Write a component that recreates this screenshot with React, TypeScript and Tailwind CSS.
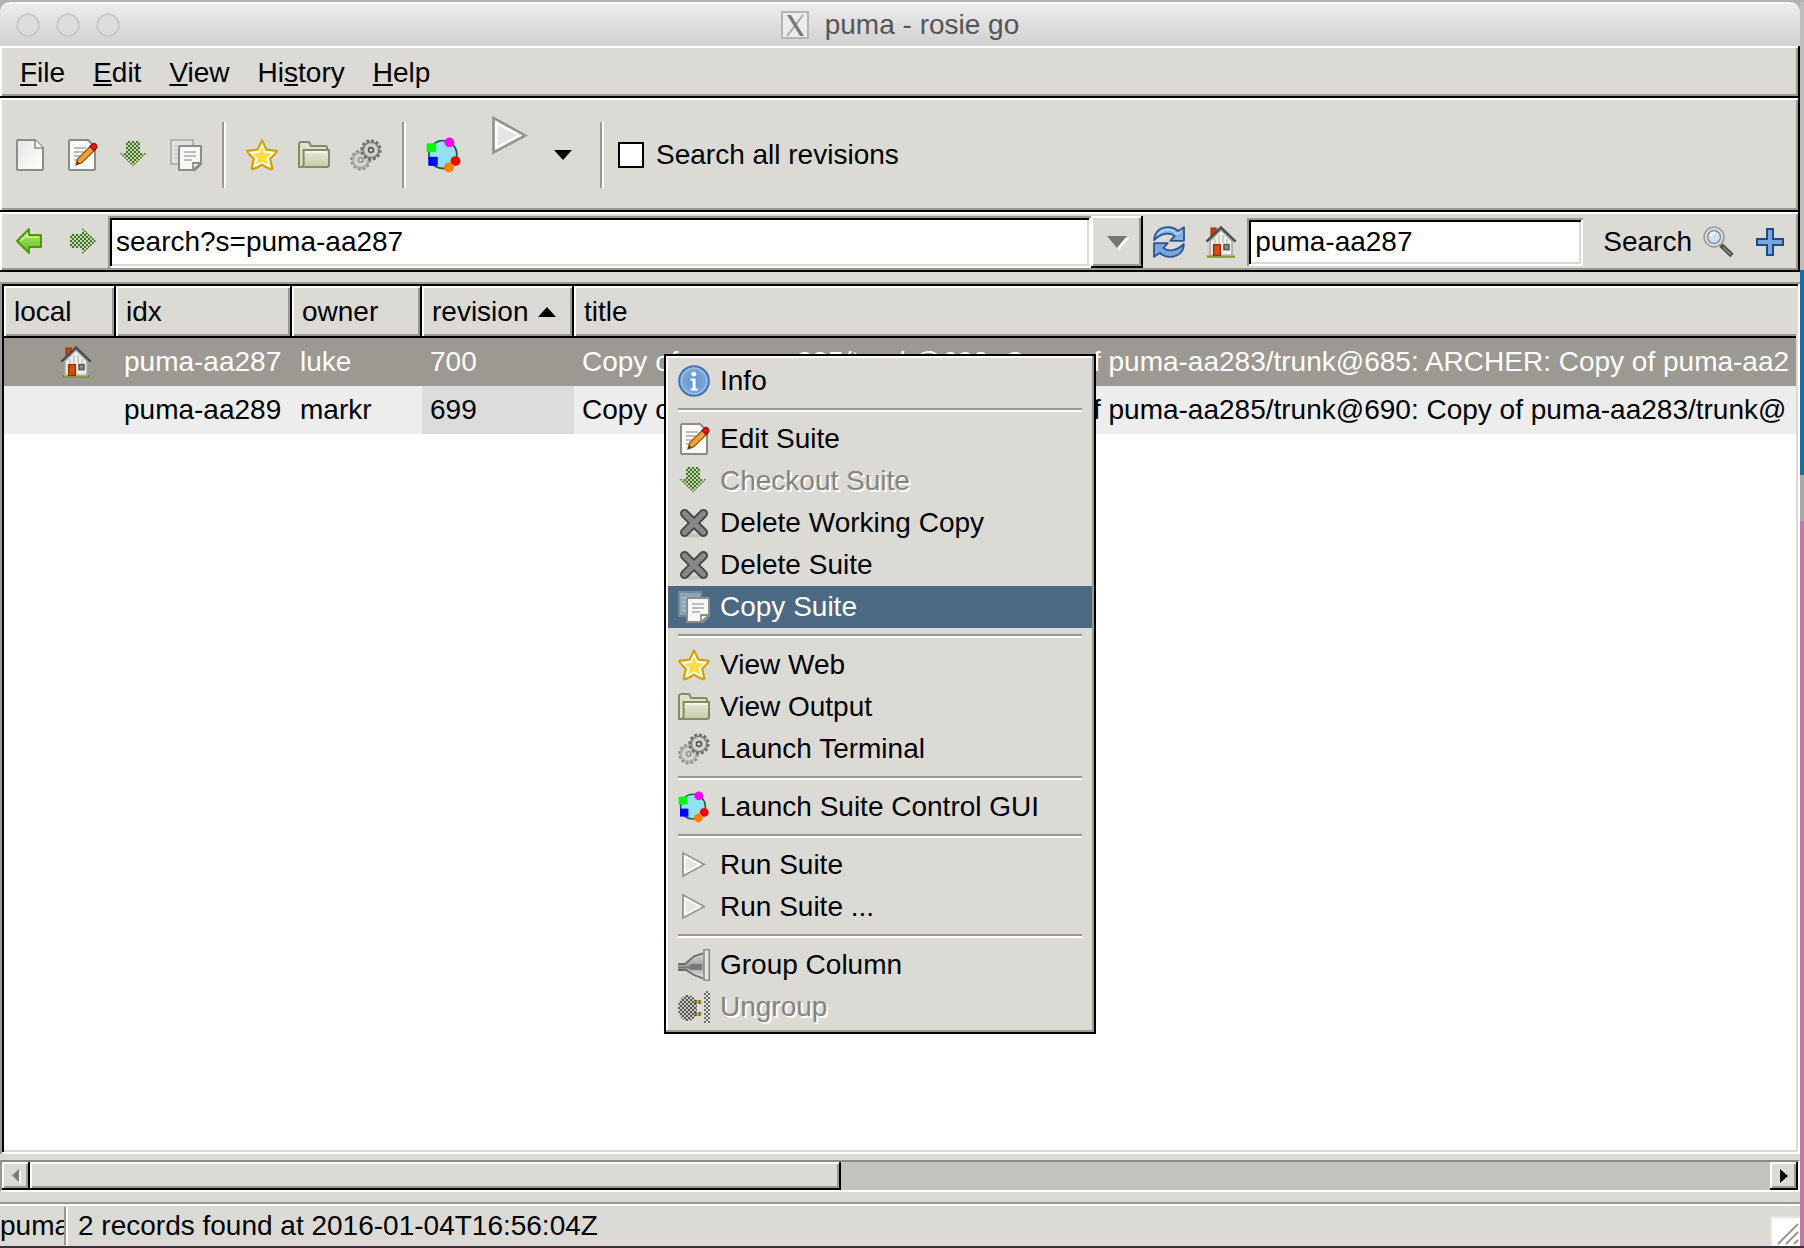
import { type FC, type ReactNode, useState } from "react";
import clsx from "clsx";

const raised =
  "bg-[#dbdad5] shadow-[inset_-2px_-2px_0_#000,inset_2px_2px_0_#fff,inset_-4px_-4px_0_#9b9891]";
const sunken =
  "shadow-[inset_2px_2px_0_#9b9891,inset_-2px_-2px_0_#fff,inset_4px_4px_0_#000,inset_-4px_-4px_0_#dbdad5]";

type IconProps = { className?: string };

const Svg: FC<{ className?: string; children: ReactNode }> = ({
  className = "size-8",
  children,
}) => (
  <svg viewBox="0 0 16 16" className={clsx("shrink-0", className)} aria-hidden>
    {children}
  </svg>
);

const SharedDefs: FC = () => (
  <svg className="absolute size-0" aria-hidden>
    <defs>
      <pattern id="dotsGreen" width="2" height="2" patternUnits="userSpaceOnUse">
        <rect width="1" height="1" fill="#3f7a1c" />
        <rect x="1" y="1" width="1" height="1" fill="#3f7a1c" />
      </pattern>
      <pattern id="dotsGrey" width="2" height="2" patternUnits="userSpaceOnUse">
        <rect width="1" height="1" fill="#55574f" />
        <rect x="1" y="1" width="1" height="1" fill="#55574f" />
      </pattern>
      <linearGradient id="paper" x1="0" y1="0" x2="1" y2="1">
        <stop offset="0" stopColor="#e6e6e4" />
        <stop offset="1" stopColor="#ffffff" />
      </linearGradient>
      <linearGradient id="green" x1="0" y1="0" x2="0" y2="1">
        <stop offset="0" stopColor="#b5ea7c" />
        <stop offset="1" stopColor="#62c01c" />
      </linearGradient>
      <linearGradient id="folder" x1="0" y1="0" x2="0" y2="1">
        <stop offset="0" stopColor="#e9ebdc" />
        <stop offset="1" stopColor="#c6cba4" />
      </linearGradient>
      <radialGradient id="info">
        <stop offset="0" stopColor="#5f95d0" />
        <stop offset="1" stopColor="#83abdc" />
      </radialGradient>
      <linearGradient id="plug" x1="0" y1="0" x2="0" y2="1">
        <stop offset="0" stopColor="#d8d8d6" />
        <stop offset="0.5" stopColor="#a2a4a0" />
        <stop offset="1" stopColor="#e4e4e2" />
      </linearGradient>
    </defs>
  </svg>
);

const NewIcon: FC<IconProps> = ({ className }) => (
  <Svg className={className}>
    <path
      d="M2 .5h8.5l4 4V15a.5.5 0 0 1-.5.5H2a.5.5 0 0 1-.5-.5V1A.5.5 0 0 1 2 .5z"
      fill="url(#paper)"
      stroke="#8b8d89"
    />
    <path d="M10.5.5v4h4" fill="#f5f5f4" stroke="#8b8d89" strokeWidth=".8" />
  </Svg>
);

const EditIcon: FC<IconProps> = ({ className }) => (
  <Svg className={className}>
    <path
      d="M2 .5h9l3.5 3.5V15a.5.5 0 0 1-.5.5H2a.5.5 0 0 1-.5-.5V1A.5.5 0 0 1 2 .5z"
      fill="#fbfbfa"
      stroke="#8b8d89"
    />
    <path d="M4 4.5h6M4 6.5h5M4 8.5h4M4 10.5h2" stroke="#bdbebb" />
    <path d="M5 13l.8-3 6.8-6.7 2 2L7.8 12z" fill="#f0a23c" stroke="#9a5a10" strokeWidth=".7" />
    <path d="M5 13l.6-2 1.3 1.3z" fill="#3c3c3c" />
    <path d="M12 3.8l1.3-1.3c1-.8 2.7.8 2 2L14 5.8z" fill="#d8201c" stroke="#a40000" strokeWidth=".6" />
  </Svg>
);

const CheckoutIcon: FC<IconProps> = ({ className }) => (
  <Svg className={className}>
    <path d="M4 1h7v6h3.5L7.5 14 .5 7H4z" fill="#b9c4ae" opacity=".6" />
    <path d="M4 1h7v6h3L7.5 13.5 1 7h3z" fill="url(#dotsGreen)" />
  </Svg>
);

const CopyIcon: FC<IconProps & { active?: boolean }> = ({ className, active }) => (
  <Svg className={className}>
    <rect
      x=".5"
      y=".5"
      width="11"
      height="12"
      fill={active ? "#8fa4b6" : "#e2e2df"}
      stroke={active ? "#73889a" : "#b3b3af"}
    />
    <path d="M2 3.5h3M2 5.5h2M2 7.5h2M2 9.5h2" stroke={active ? "#b3c1cd" : "#c9c9c6"} strokeWidth=".7" />
    <path d="M5 3.5h10.5v9l-3 3h-8V4z" fill="#f7f7f6" stroke="#8b8d89" />
    <path d="M7 6.5h6M7 8.5h6M7 10.5h4" stroke="#bdbebb" />
    <path d="M11.5 15.5v-3.500h4z" fill="#fff" stroke="#8b8d89" strokeWidth=".9" />
  </Svg>
);

const StarIcon: FC<IconProps> = ({ className }) => (
  <Svg className={className}>
    <path
      d="M8 .7l2.2 4.6 5.2.6c.2.5-1.9 2.7-3.3 4l1.1 5c-.4.7-3.5-.9-5.2-2.1-1.7 1.2-4.8 2.8-5.2 2.1l1.1-5C2.5 8.600.4 6.400.6 5.9l5.2-.6z"
      fill="#fffbe0"
      stroke="#cfa20a"
      strokeWidth="1.1"
      strokeLinejoin="round"
    />
    <path d="M8 4l1.3 3 3.500.4-2.600 2.200.7 3.200L8 11.200l-2.900 1.600.7-3.200-2.600-2.200L6.700 7z" fill="#f7de45" />
  </Svg>
);

const FolderIcon: FC<IconProps> = ({ className }) => (
  <Svg className={className}>
    <path d="M.5 14V2.5a1 1 0 0 1 1-1h4l1 2h7a1 1 0 0 1 1 1V14z" fill="#dfe2ca" stroke="#85896a" />
    <path
      d="M2.8 5.5h12.700v7.500a1 1 0 0 1-1 1h-13c1 0 1.300-.5 1.300-2z"
      fill="url(#folder)"
      stroke="#85896a"
    />
    <path d="M3.500 6.500h11" stroke="#f4f5ec" />
  </Svg>
);

const GearsIcon: FC<IconProps> = ({ className }) => (
  <Svg className={className}>
    <circle cx="5.3" cy="10.5" r="4.6" fill="#cbccc8" stroke="#8f918d" strokeWidth="1.2" strokeDasharray="1.4 1" />
    <circle cx="5.3" cy="10.5" r="3.8" fill="#d3d4d0" stroke="#a5a7a3" strokeWidth=".8" />
    <circle cx="5.3" cy="10.5" r="1.1" fill="#dbdad5" stroke="#8f918d" strokeWidth=".8" />
    <circle cx="10.5" cy="5.500" r="4.7" fill="#cfd0cc" stroke="#6a6c68" strokeWidth="1.2" strokeDasharray="1.45 1" />
    <circle cx="10.5" cy="5.500" r="3.9" fill="#d1d2ce" stroke="#777975" strokeWidth=".8" />
    <circle cx="10.5" cy="5.500" r="1.2" fill="#dbdad5" stroke="#5a5c58" strokeWidth=".9" />
  </Svg>
);

const CylcIcon: FC<IconProps> = ({ className }) => (
  <Svg className={className}>
    <circle cx="7.5" cy="7.8" r="6.2" fill="#8fe3ec" stroke="#27594a" strokeWidth=".8" />
    <rect x=".3" y="2.800" width="4.2" height="3.9" fill="#0f0" />
    <rect x="1" y="8.800" width="4.2" height="4" fill="#00f" />
    <circle cx="10.4" cy="2.4" r="2.2" fill="#f0f" />
    <circle cx="13.1" cy="10.700" r="2.2" fill="#f00" />
    <circle cx="10.2" cy="13.5" r="2.2" fill="#ff7f00" />
  </Svg>
);

const PlayIcon: FC<IconProps> = ({ className }) => (
  <Svg className={className}>
    <path d="M2.5 2L13 7.8 2.500 13.500z" fill="#e6e6e3" stroke="#939591" strokeWidth=".9" />
    <path d="M3.400 3.500l7.900 4.300-7.900 4.200z" fill="none" stroke="#fff" strokeWidth=".8" />
  </Svg>
);

const ArrowLeftIcon: FC<IconProps> = ({ className }) => (
  <Svg className={className}>
    <path d="M1.5 7.5l6-6v3h6v6h-6v3z" fill="url(#green)" stroke="#4e9a06" strokeLinejoin="round" />
    <path d="M3.200 7.500l3.500-3.400v1.600h5.600" fill="none" stroke="#d4f5ae" strokeWidth=".7" />
  </Svg>
);

const ArrowRightIcon: FC<IconProps> = ({ className }) => (
  <Svg className={className}>
    <path d="M1 4h6V1l7 6.5L7 14v-3H1z" fill="#b9c4ae" opacity=".5" />
    <path d="M1 4h6V1l7 6.5L7 14v-3H1z" fill="url(#dotsGreen)" />
  </Svg>
);

const RefreshIcon: FC<IconProps> = ({ className }) => (
  <Svg className={className}>
    <path
      d="M.6 7C.6 3 3.500.6 7.500.6c2.200 0 3.800.7 5 1.900L15.500.6v6.800H8.600l2.200-2.300C8.500 3 4 3.500.6 7z"
      fill="#86b0e0"
      stroke="#2a5596"
      strokeWidth=".9"
      strokeLinejoin="round"
    />
    <path
      d="M15.400 9c0 4-2.900 6.400-6.900 6.400-2.200 0-3.800-.7-5-1.900L.5 15.400V8.600h6.900l-2.200 2.300C7.500 13 12 12.500 15.400 9z"
      fill="#7aa6da"
      stroke="#2a5596"
      strokeWidth=".9"
      strokeLinejoin="round"
    />
    <path d="M2.300 4.500C4.500 1.500 9 .9 12 4l2.300-1.300" fill="none" stroke="#b9d2ee" strokeWidth=".8" />
  </Svg>
);

const HomeIcon: FC<IconProps> = ({ className }) => (
  <Svg className={className}>
    <path d="M1 15.3h14" stroke="#7d9c10" strokeWidth="1.2" />
    <rect x="3" y="1" width="2.6" height="4" fill="#c94408" stroke="#8f2f00" strokeWidth=".5" />
    <path d="M2.5 14.700V7.500L8 2l5.500 5.500v7.200z" fill="#efefed" stroke="#a8aaa6" strokeWidth=".8" />
    <path d="M5 6.500v2M7 4.500v4M9 4.500v4M11 6.500v2" stroke="#c4c6c2" strokeWidth=".8" />
    <path d="M.7 7.800L8 .8l7.300 7" fill="none" stroke="#4b4f4e" strokeWidth="1.300" />
    <rect x="4.300" y="9.300" width="3.400" height="5.400" fill="#d4500c" stroke="#9c3000" strokeWidth=".7" />
    <rect x="9.500" y="9.300" width="2.500" height="2.500" fill="#8d9288" stroke="#555753" strokeWidth=".8" />
  </Svg>
);

const SearchIcon: FC<IconProps> = ({ className }) => (
  <Svg className={className}>
    <path d="M9.500 9.500l5.500 5.300" stroke="#4d4f4b" strokeWidth="2.400" />
    <path d="M10.500 10.500l4 3.900" stroke="#8b8d89" strokeWidth=".8" />
    <circle cx="6" cy="5.500" r="4.900" fill="#f4f4f3" stroke="#9b9d99" strokeWidth=".9" />
    <circle cx="6" cy="5.500" r="3.300" fill="#cfe0f2" stroke="#8897a8" strokeWidth=".9" />
    <path d="M4.300 5a2 2 0 0 1 2-1.600" fill="none" stroke="#fff" />
  </Svg>
);

const PlusIcon: FC<IconProps> = ({ className }) => (
  <Svg className={className}>
    <path d="M6.500 1.500h3v5h5v3h-5v5h-3v-5h-5v-3h5z" fill="#78a7da" stroke="#1f4a87" />
  </Svg>
);

const InfoIcon: FC<IconProps> = ({ className }) => (
  <Svg className={className}>
    <circle cx="8" cy="8" r="7.400" fill="url(#info)" stroke="#4272b4" />
    <circle cx="8" cy="8" r="6.400" fill="none" stroke="#a3c1e6" strokeWidth=".6" />
    <circle cx="7.900" cy="4.600" r="1.200" fill="#fff" />
    <path d="M6.300 6.800h2.500v4.900h1.100v1.100H6.300v-1.100h1V7.900h-1z" fill="#fff" />
  </Svg>
);

const DeleteIcon: FC<IconProps> = ({ className }) => (
  <Svg className={className}>
    <ellipse cx="8" cy="14.200" rx="5" ry="1" fill="#c4c3be" />
    <path d="M3.300 3.300l9.400 9.400M12.700 3.300l-9.400 9.400" stroke="#43484a" strokeWidth="4.600" strokeLinecap="round" />
    <path d="M3.300 3.300l9.400 9.400M12.700 3.300l-9.400 9.400" stroke="#868985" strokeWidth="2.700" strokeLinecap="round" />
  </Svg>
);

const GroupIcon: FC<IconProps> = ({ className }) => (
  <Svg className={className}>
    <path d="M0 7.500h4L8 3.500 13 2v12.500L8.500 13 4.500 10.500H0z" fill="url(#plug)" />
    <path d="M0 7.500h3.500L8 3.700l4.500-1.500M0 10.500h4L8 13l4.500 1.700" fill="none" stroke="#6b6d69" strokeWidth=".9" />
    <path d="M0 8.700h5l2-1.200h5v3H7L5 9.700H0z" fill="#777975" />
    <rect x="13" y=".3" width="2.600" height="15.400" fill="#e8e8e6" stroke="#8b8d89" strokeWidth=".8" />
  </Svg>
);

const UngroupIcon: FC<IconProps> = ({ className }) => (
  <Svg className={className}>
    <ellipse cx="4.800" cy="8.500" rx="4.800" ry="6.500" fill="#b9b9b4" opacity=".6" />
    <ellipse cx="4.800" cy="8.500" rx="4.800" ry="6.500" fill="url(#dotsGrey)" />
    <path d="M8.500 5.500h3.500M8.500 11.500h3.500" stroke="#d8c65a" strokeWidth="2" />
    <path d="M8.500 5.500h3.500M8.500 11.500h3.500" stroke="#5c5320" strokeWidth="2" strokeDasharray=".9 .9" />
    <rect x="13" y="0" width="3" height="16" fill="url(#dotsGrey)" opacity=".8" />
  </Svg>
);

const menus = [
  { before: "", key: "F", after: "ile" },
  { before: "", key: "E", after: "dit" },
  { before: "", key: "V", after: "iew" },
  { before: "Hi", key: "s", after: "tory" },
  { before: "", key: "H", after: "elp" },
];

const suites = [
  {
    local: true,
    idx: "puma-aa287",
    owner: "luke",
    revision: 700,
    title:
      "Copy of puma-aa285/trunk@690: Copy of puma-aa283/trunk@685: ARCHER: Copy of puma-aa2",
  },
  {
    local: false,
    idx: "puma-aa289",
    owner: "markr",
    revision: 699,
    title: "Copy of puma-aa287/trunk@698: Copy of puma-aa285/trunk@690: Copy of puma-aa283/trunk@",
  },
];

type MenuEntry = { label: string; icon: ReactNode; disabled?: boolean; active?: boolean };

const contextMenu: MenuEntry[][] = [
  [{ label: "Info", icon: <InfoIcon /> }],
  [
    { label: "Edit Suite", icon: <EditIcon /> },
    { label: "Checkout Suite", icon: <CheckoutIcon />, disabled: true },
    { label: "Delete Working Copy", icon: <DeleteIcon /> },
    { label: "Delete Suite", icon: <DeleteIcon /> },
    { label: "Copy Suite", icon: <CopyIcon active />, active: true },
  ],
  [
    { label: "View Web", icon: <StarIcon /> },
    { label: "View Output", icon: <FolderIcon /> },
    { label: "Launch Terminal", icon: <GearsIcon /> },
  ],
  [{ label: "Launch Suite Control GUI", icon: <CylcIcon /> }],
  [
    { label: "Run Suite", icon: <PlayIcon /> },
    { label: "Run Suite ...", icon: <PlayIcon /> },
  ],
  [
    { label: "Group Column", icon: <GroupIcon /> },
    { label: "Ungroup", icon: <UngroupIcon />, disabled: true },
  ],
];

const ToolButton: FC<{ label: string; children: ReactNode }> = ({ label, children }) => (
  <button type="button" aria-label={label} className="shrink-0">
    {children}
  </button>
);

const ToolSeparator: FC = () => (
  <div className="h-[66px] w-1 shrink-0 border-r-2 border-l-2 border-r-white border-l-[#9b9891]" />
);

const TitleBar: FC = () => (
  <header className="grid h-11 grid-cols-[1fr_auto_1fr] items-center rounded-t-[10px] border-t-2 border-[#f6f6f6] bg-linear-to-b from-[#ececec] to-[#d1d1d1] px-4">
    <div className="flex gap-4">
      {["Close", "Minimise", "Zoom"].map((name) => (
        <button
          key={name}
          type="button"
          aria-label={name}
          className="size-6 rounded-full border-2 border-[#cbcbcb] bg-[#dcdcdc]"
        />
      ))}
    </div>
    <div className="flex items-center gap-4">
      <svg viewBox="0 0 28 28" className="size-7" aria-hidden>
        <rect x="1" y="1" width="26" height="26" fill="#ececec" stroke="#b4b4b4" strokeWidth="2" />
        <path d="M22 4L6 25" stroke="#a8a8a8" strokeWidth="2" />
        <path d="M6 4h4l13 21h-4z" fill="#7a7a7a" />
      </svg>
      <h1 className="text-[28px] leading-8 text-[#555]">puma - rosie go</h1>
    </div>
  </header>
);

const MenuBar: FC = () => (
  <nav className={clsx("flex h-[52px] items-center px-[6px] pt-[2px]", raised)}>
    {menus.map(({ before, key, after }) => (
      <button key={key + after} type="button" className="px-[14px] leading-9">
        {before}
        <span className="underline decoration-2 underline-offset-2 [text-decoration-skip-ink:none]">
          {key}
        </span>
        {after}
      </button>
    ))}
  </nav>
);

const Toolbar: FC = () => {
  const [allRevisions, setAllRevisions] = useState(false);

  return (
    <div className={clsx("flex h-[114px] items-center gap-5 pl-[14px]", raised)}>
      <ToolButton label="New Suite">
        <NewIcon />
      </ToolButton>
      <ToolButton label="Edit Suite">
        <EditIcon />
      </ToolButton>
      <ToolButton label="Checkout Suite">
        <CheckoutIcon />
      </ToolButton>
      <ToolButton label="Copy Suite">
        <CopyIcon />
      </ToolButton>
      <ToolSeparator />
      <ToolButton label="View Web">
        <StarIcon />
      </ToolButton>
      <ToolButton label="View Output">
        <FolderIcon />
      </ToolButton>
      <ToolButton label="Launch Terminal">
        <GearsIcon />
      </ToolButton>
      <ToolSeparator />
      <ToolButton label="Launch Suite Control GUI">
        <CylcIcon className="size-9" />
      </ToolButton>
      <div className="flex items-center gap-5 self-stretch pl-1">
        <button type="button" aria-label="Run Suite" className="self-start pt-[14px]">
          <PlayIcon className="size-12" />
        </button>
        <button type="button" aria-label="Run options">
          <svg viewBox="0 0 18 10" className="h-[10px] w-[18px]" aria-hidden>
            <path d="M0 0h18L9 10z" />
          </svg>
        </button>
      </div>
      <div className="flex items-center gap-[14px] pl-2">
        <ToolSeparator />
        <label className="flex items-center gap-3">
          <input
            type="checkbox"
            checked={allRevisions}
            onChange={(e) => {
              setAllRevisions(e.target.checked);
            }}
            className="size-[26px] appearance-none border-2 border-black bg-white checked:bg-black"
          />
          Search all revisions
        </label>
      </div>
    </div>
  );
};

const NavBar: FC = () => {
  const [address, setAddress] = useState("search?s=puma-aa287");
  const [query, setQuery] = useState("puma-aa287");

  return (
    <div className={clsx("flex h-[60px] items-center px-[14px]", raised)}>
      <div className="flex gap-[22px] pr-2">
        <ToolButton label="Previous">
          <ArrowLeftIcon />
        </ToolButton>
        <ToolButton label="Next">
          <ArrowRightIcon />
        </ToolButton>
      </div>
      <input
        aria-label="Address"
        value={address}
        onChange={(e) => {
          setAddress(e.currentTarget.value);
        }}
        className={clsx("h-[52px] min-w-0 flex-1 bg-white px-2", sunken)}
      />
      <button
        type="button"
        aria-label="Show address history"
        className={clsx("flex h-[52px] w-[52px] items-center justify-center", raised)}
      >
        <svg viewBox="0 0 24 16" className="h-4 w-6" aria-hidden>
          <path d="M4 4h20L14 16z" fill="#fff" />
          <path d="M2 2h20L12 14z" fill="#757575" />
        </svg>
      </button>
      <div className="flex gap-5 px-[10px]">
        <ToolButton label="Refresh">
          <RefreshIcon />
        </ToolButton>
        <ToolButton label="Show local suites">
          <HomeIcon />
        </ToolButton>
      </div>
      <input
        aria-label="Search text"
        value={query}
        onChange={(e) => {
          setQuery(e.currentTarget.value);
        }}
        className={clsx("h-12 w-[336px] bg-white px-2", sunken)}
      />
      <div className="flex items-center gap-5 pl-5">
        <button type="button" className="flex items-center gap-[10px]">
          Search
          <SearchIcon />
        </button>
        <ToolButton label="Add filter">
          <PlusIcon />
        </ToolButton>
      </div>
    </div>
  );
};

const ColumnHead: FC<{ label: string; width: string; sorted?: boolean }> = ({
  label,
  width,
  sorted,
}) => (
  <th className={clsx("h-[52px] p-0 text-left font-normal", width)}>
    <button
      type="button"
      className={clsx("flex h-full w-full items-center gap-[10px] pl-[10px]", raised)}
    >
      {label}
      {sorted && (
        <svg viewBox="0 0 18 10" className="h-[10px] w-[18px]" aria-hidden>
          <path d="M9 0l9 10H0z" />
        </svg>
      )}
    </button>
  </th>
);

const SuiteTable: FC = () => (
  <main className={clsx("flex-1 bg-white p-1", sunken)}>
    {/* the title column runs on past the right edge of the view */}
    <div className="overflow-hidden">
      <table className="w-[120%] table-fixed border-collapse">
        <thead>
          <tr>
            <ColumnHead label="local" width="w-28" />
            <ColumnHead label="idx" width="w-44" />
            <ColumnHead label="owner" width="w-[130px]" />
            <ColumnHead label="revision" width="w-[152px]" sorted />
            <ColumnHead label="title" width="w-auto" />
          </tr>
        </thead>
        <tbody>
          {suites.map((suite, i) => (
            <tr
              key={suite.idx}
              className={clsx("h-12", i === 0 ? "bg-[#9b9992] text-white" : "bg-[#ededed]")}
            >
              <td className="p-0 pl-14">{suite.local && <HomeIcon className="block size-8" />}</td>
              <td className="p-0 pl-2">{suite.idx}</td>
              <td className="p-0 pl-2">{suite.owner}</td>
              <td className={clsx("p-0 pl-2", i !== 0 && "bg-[#dcdcdc]")}>{suite.revision}</td>
              <td className="p-0 pl-2 whitespace-nowrap">{suite.title}</td>
            </tr>
          ))}
        </tbody>
      </table>
    </div>
  </main>
);

const ScrollBar: FC = () => (
  <div className="flex h-8 border-2 border-t-[#8b8a84] border-r-white border-b-white border-l-[#9b9891] bg-[#c3c2bd]">
    <button
      type="button"
      aria-label="Scroll left"
      className={clsx("flex w-7 items-center justify-center", raised)}
    >
      <svg viewBox="0 0 10 16" className="h-4 w-[10px]" aria-hidden>
        <path d="M10 2v14L4 9z" fill="#fff" />
        <path d="M8 1v13L1 7.500z" fill="#7d7c78" />
      </svg>
    </button>
    <div className="flex-1">
      <div className={clsx("h-full w-[46.6%]", raised)} />
    </div>
    <button
      type="button"
      aria-label="Scroll right"
      className={clsx("flex w-7 items-center justify-center", raised)}
    >
      <svg viewBox="0 0 10 16" className="h-4 w-[10px]" aria-hidden>
        <path d="M1 1v14l8-7z" />
      </svg>
    </button>
  </div>
);

const StatusBar: FC = () => (
  <footer className="flex h-11 items-center border-t-2 border-[#9b9891] pt-[2px] shadow-[inset_0_2px_0_#fff]">
    <div className="w-16 overflow-hidden whitespace-nowrap">puma</div>
    <div className="h-[38px] w-1 border-r-2 border-l-2 border-r-white border-l-[#9b9891]" />
    <p className="flex-1 pl-[10px]">2 records found at 2016-01-04T16:56:04Z</p>
    <svg viewBox="0 0 30 30" className="size-[30px] self-end" aria-hidden>
      <rect width="30" height="30" fill="#e6e6e4" />
      <rect x="2" y="2" width="28" height="28" fill="#fff" />
      <path d="M8 28L28 8M16 28L28 16M24 28l4-4" stroke="#9b9992" strokeWidth="2" />
    </svg>
  </footer>
);

const ContextMenu: FC = () => (
  <div
    role="menu"
    className="absolute top-[354px] left-[664px] w-[432px] border-2 border-black bg-[#dbdad5] px-[2px] py-1 shadow-[inset_-2px_-2px_0_#9b9891,inset_2px_2px_0_#fff]"
  >
    {contextMenu.map((group, i) => (
      <div key={group[0].label}>
        {i > 0 && (
          <hr className="mx-[10px] my-[6px] h-1 border-t-2 border-b-2 border-t-[#9b9891] border-b-white" />
        )}
        {group.map(({ label, icon, disabled, active }) => (
          <button
            key={label}
            type="button"
            role="menuitem"
            disabled={disabled}
            className={clsx(
              "flex h-[42px] w-full items-center gap-[10px] px-[10px]",
              active && "bg-[#4b6983] text-white",
              disabled && "text-[#858480] [text-shadow:2px_2px_0_#fff]",
            )}
          >
            {icon}
            {label}
          </button>
        ))}
      </div>
    ))}
  </div>
);

const App: FC = () => {
  return (
    <div className="relative flex min-h-screen flex-col bg-[#b2b2b2] pt-[2px] font-['Liberation_Sans',Arial,sans-serif] text-[28px] leading-8 text-black">
      <SharedDefs />
      <div className="flex flex-1">
        <div className="flex min-w-0 flex-1 flex-col">
          <TitleBar />
          <div className="flex flex-1 flex-col bg-[#dbdad5]">
            <MenuBar />
            <Toolbar />
            <NavBar />
            <div className="flex flex-1 flex-col pt-[10px] pb-[6px]">
              <SuiteTable />
            </div>
            <ScrollBar />
            <div className="pt-[10px]">
              <StatusBar />
            </div>
          </div>
        </div>
        {/* sliver of the desktop behind the window */}
        <div className="flex w-1 flex-col bg-[#b87fa3]">
          <div className="h-[268px] bg-[#bdbdbd]" />
          <div className="h-[205px] bg-[#1d6c9c]" />
          <div className="h-[46px] bg-[#a9a7a8]" />
        </div>
      </div>
      <div className="h-[2px] bg-[#452a3d]" />
      <ContextMenu />
    </div>
  );
};

export default App;
